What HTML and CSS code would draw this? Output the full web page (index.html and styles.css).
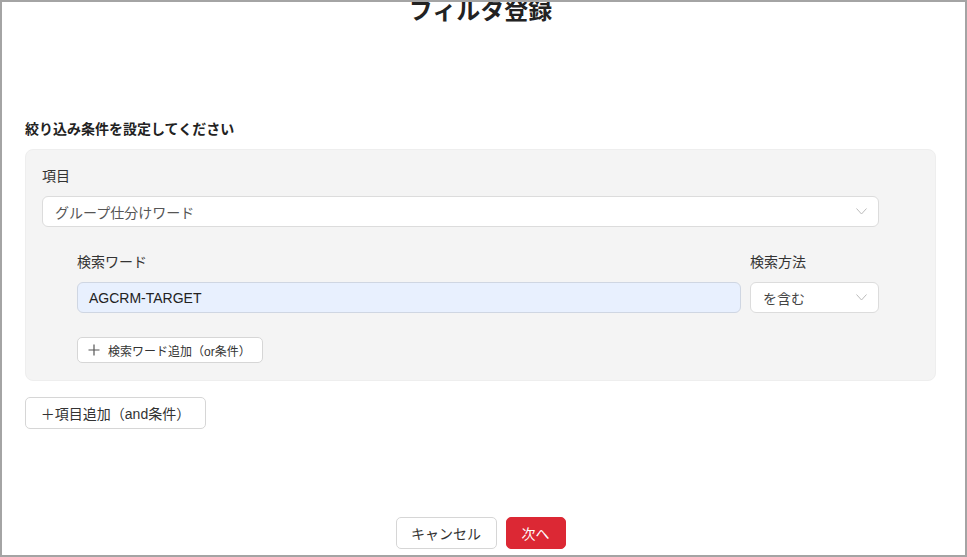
FILE: index.html
```html
<!DOCTYPE html>
<html lang="ja">
<head>
<meta charset="utf-8">
<title>フィルタ登録</title>
<link rel="stylesheet" href="styles.css">
</head>
<body>
<div class="frame">
  <div class="content">
    <h1 class="title">フィルタ登録</h1>
    <p class="section-title">絞り込み条件を設定してください</p>
    <div class="panel">
      <div class="label">項目</div>
      <div class="select select-wide">
        <span>グループ仕分けワード</span>
        <svg class="chev" width="11" height="7" viewBox="0 0 11 7"><polyline points="0.5,0.5 5.5,6 10.5,0.5" fill="none" stroke="#bbb" stroke-width="1"/></svg>
      </div>
      <div class="sub">
        <div class="row">
          <div class="col-word">
            <div class="label">検索ワード</div>
            <div class="input">AGCRM-TARGET</div>
          </div>
          <div class="col-method">
            <div class="label">検索方法</div>
            <div class="select">
              <span>を含む</span>
              <svg class="chev" width="11" height="7" viewBox="0 0 11 7"><polyline points="0.5,0.5 5.5,6 10.5,0.5" fill="none" stroke="#bbb" stroke-width="1"/></svg>
            </div>
          </div>
        </div>
        <button class="btn-small" type="button">
          <svg width="12" height="12" viewBox="0 0 12 12"><path d="M6 0.5V11.5M0.5 6H11.5" stroke="#555" stroke-width="1.2" fill="none"/></svg>
          <span>検索ワード追加（or条件）</span>
        </button>
      </div>
    </div>
    <button class="btn-add" type="button">＋項目追加（and条件）</button>
    <div class="actions">
      <button class="btn-cancel" type="button">キャンセル</button>
      <button class="btn-next" type="button">次へ</button>
    </div>
  </div>
</div>
</body>
</html>
```
FILE: styles.css
```css
* { box-sizing: border-box; }
html, body { margin: 0; padding: 0; background: #fff; }
body {
  font-family: "Liberation Sans", "Noto Sans CJK JP", sans-serif;
  color: #333;
}
.frame {
  width: 967px;
  height: 557px;
  border: 2px solid #a4a4a4;
  overflow: hidden;
}
.content {
  padding: 0 29px 0 23px;
}
.title {
  margin: -7px 0 0;
  font-size: 24px;
  line-height: 32px;
  font-weight: 700;
  text-align: center;
  color: #222;
}
.section-title {
  margin: 92px 0 0;
  font-size: 14px;
  line-height: 20px;
  font-weight: 700;
  color: #222;
}
.panel {
  margin-top: 10px;
  background: #f4f4f4;
  border: 1px solid #eeeeee;
  border-radius: 8px;
  padding: 16px 56px 17px 16px;
}
.label {
  font-size: 14px;
  line-height: 20px;
  color: #333;
}
.select {
  margin-top: 10px;
  height: 31px;
  background: #fff;
  border: 1px solid #dcdcdc;
  border-radius: 6px;
  display: flex;
  align-items: center;
  justify-content: space-between;
  padding: 0 11px 0 12px;
  font-size: 14px;
  color: #444;
}
.select-wide span { color: #555; }
.chev { display: block; }
.sub {
  padding-left: 35px;
  margin-top: 25px;
}
.row {
  display: flex;
  gap: 9px;
}
.col-word { flex: 1; }
.col-method { width: 129px; }
.input {
  margin-top: 10px;
  height: 31px;
  background: #e8f0fe;
  border: 1px solid #cfd6e2;
  border-radius: 6px;
  display: flex;
  align-items: center;
  padding: 0 11px;
  font-size: 14px;
  color: #222;
}
.btn-small {
  margin-top: 24px;
  height: 26px;
  display: inline-flex;
  align-items: center;
  gap: 8px;
  padding: 0 11px 0 10px;
  background: #fff;
  border: 1px solid #d6d6d6;
  border-radius: 5px;
  font-family: inherit;
  font-size: 12px;
  color: #333;
}
.btn-add {
  margin-top: 16px;
  height: 32px;
  width: 181px;
  background: #fff;
  border: 1px solid #d6d6d6;
  border-radius: 5px;
  font-family: inherit;
  font-size: 14px;
  color: #333;
  padding: 0;
}
.actions {
  margin-top: 88px;
  display: flex;
  justify-content: center;
  gap: 9px;
}
.btn-cancel, .btn-next {
  height: 32px;
  border-radius: 5px;
  font-family: inherit;
  font-size: 14px;
  padding: 0;
}
.btn-cancel {
  width: 101px;
  background: #fff;
  border: 1px solid #d6d6d6;
  color: #333;
}
.btn-next {
  width: 60px;
  background: #dc2834;
  border: 1px solid #dc2834;
  color: #fff;
}
```
